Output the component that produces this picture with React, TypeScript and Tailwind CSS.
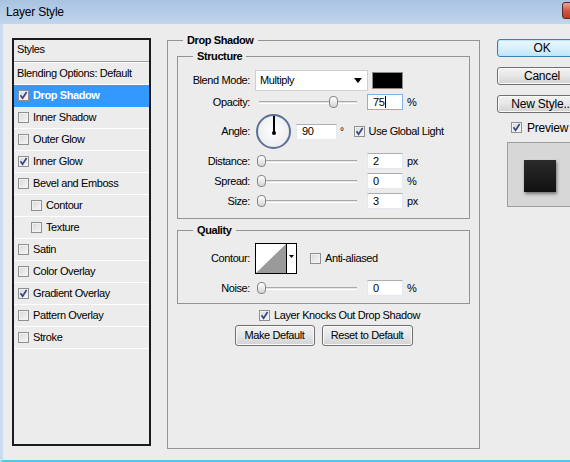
import React from "react";

const styleRows = [
  { label: "Drop Shadow", on: true, selected: true },
  { label: "Inner Shadow" },
  { label: "Outer Glow" },
  { label: "Inner Glow", on: true },
  { label: "Bevel and Emboss" },
  { label: "Contour", nested: true },
  { label: "Texture", nested: true },
  { label: "Satin" },
  { label: "Color Overlay" },
  { label: "Gradient Overlay", on: true },
  { label: "Pattern Overlay" },
  { label: "Stroke" },
];

function Check({ on }: { on?: boolean }) {
  return (
    <span className="inline-flex w-[11px] h-[11px] shrink-0 items-center justify-center border border-[#8f8f8f] bg-gradient-to-br from-[#d8d8d8] to-[#f7f7f7] shadow-[inset_0_0_0_1px_#f2f2f2]">
      {on && (
        <svg width="9" height="9" viewBox="0 0 9 9">
          <path d="M1.5 4.2 L3.6 7.2 L7.6 1" fill="none" stroke="#33478c" strokeWidth="1.7" />
        </svg>
      )}
    </span>
  );
}

function Field({ value, className, focus }: { value: string; className: string; focus?: boolean }) {
  return (
    <div
      className={`h-[16px] bg-white pl-[5px] flex items-center text-[11px] leading-none border ${
        focus ? "border-[#7eb4ea]" : "border-[#e3e9ef] border-t-[#abadb3]"
      } ${className}`}
    >
      {value}
      {focus && <span className="w-px h-[12px] bg-black ml-px" />}
    </div>
  );
}

function Slider({ pos }: { pos: number }) {
  return (
    <div className="relative w-[104px] h-[14px] shrink-0">
      <div className="absolute left-[4px] right-[2px] top-[6px] h-[3px] bg-[#e4e4e4] border-t border-[#a9a9a9] border-b border-b-white" />
      <div
        className="absolute top-[1px] w-[9px] h-[12px] rounded-[4px] border border-[#858585] bg-gradient-to-b from-white to-[#d6d6d6]"
        style={{ left: pos }}
      />
    </div>
  );
}

function Label({ children }: { children: React.ReactNode }) {
  return <span className="w-[73px] shrink-0 text-right pr-px">{children}</span>;
}

function SliderRow({ label, value, unit, pos, focus, className }: { label: string; value: string; unit: string; pos: number; focus?: boolean; className: string }) {
  return (
    <div className={`flex items-center h-[16px] ${className}`}>
      <Label>{label}</Label>
      <div className="ml-[4px]">
        <Slider pos={pos} />
      </div>
      <Field value={value} focus={focus} className="w-[36px] ml-[8px]" />
      <span className="ml-[4px]">{unit}</span>
    </div>
  );
}

function WinButton({ children, className, primary }: { children: React.ReactNode; className: string; primary?: boolean }) {
  return (
    <div
      className={`flex items-center justify-center rounded-[3px] border ${
        primary
          ? "border-[#3c7fb1] bg-gradient-to-b from-[#eaf6fd] via-[#d9f0fc] to-[#bee6fd] shadow-[inset_0_0_0_1px_#c0e4f8]"
          : "border-[#707070] bg-gradient-to-b from-[#f2f2f2] via-[#e6e6e6] to-[#d2d2d2] shadow-[inset_0_0_0_1px_#fafafa]"
      } ${className}`}
    >
      {children}
    </div>
  );
}

function Legend({ children }: { children: React.ReactNode }) {
  return <legend className="ml-[15px] px-[4px] font-bold leading-[14px]">{children}</legend>;
}

export default function App() {
  return (
    <div className="w-[570px] h-[462px] overflow-hidden bg-[#ececec] flex flex-col text-[11px] text-black tracking-[-0.4px] font-['Liberation_Sans',Arial,sans-serif]">
      {/* title bar */}
      <div className="h-[24px] shrink-0 flex items-center justify-between bg-gradient-to-b from-[#a9c3e0] to-[#c1d6ee]">
        <span className="pl-[6px] text-[12px] tracking-[-0.2px]">Layer Style</span>
        <span className="w-[12px] h-[17px] mt-[-3px] -mr-[4px] rounded-[3px] border border-[#5b2a2a] bg-gradient-to-b from-[#e7a594] via-[#cf5a45] to-[#c03a26]" />
      </div>

      <div className="flex-1 flex items-start border-l-[3px] border-l-[#c9dcf0] border-b-2 border-b-[#5ec3e9] pl-[9px]">
        {/* styles list */}
        <div className="mt-[14px] w-[139px] h-[408px] shrink-0 border-2 border-[#1b1b1b] bg-[#ececec] flex flex-col">
          <div className="h-[21px] pt-[2px] pl-[3px] leading-[14px]">Styles</div>
          <div className="h-[2px] border-t border-[#9c9c9c] border-b border-b-white" />
          <div className="h-[22px] flex items-center pl-[3px] border-b border-white">Blending Options: Default</div>
          {styleRows.map((r) => (
            <div
              key={r.label}
              className={`h-[22px] flex items-center gap-[4px] border-b ${
                r.selected ? "bg-[#3399ff] text-white font-bold border-[#3399ff]" : "border-white"
              } ${r.nested ? "pl-[17px]" : "pl-[4px]"}`}
            >
              <Check on={r.on} />
              <span>{r.label}</span>
            </div>
          ))}
        </div>

        {/* drop shadow panel */}
        <fieldset className="ml-[16px] mt-[9px] w-[313px] h-[416px] shrink-0 border border-[#949494]">
          <Legend>Drop Shadow</Legend>
          <div className="px-[9px] flex flex-col">
            <fieldset className="mt-[2px] border border-[#949494] pb-[9px]">
              <Legend>Structure</Legend>
              <div className="flex items-center mt-[7px] h-[21px]">
                <Label>Blend Mode:</Label>
                <div className="ml-[4px] w-[113px] h-[21px] bg-white border border-[#cfcfcf] flex items-center justify-between pl-[4px] pr-[5px]">
                  <span>Multiply</span>
                  <svg width="8" height="5" viewBox="0 0 8 5">
                    <path d="M0 0 H8 L4 5 Z" fill="#000" />
                  </svg>
                </div>
                <div className="ml-[4px] w-[31px] h-[17px] bg-black border border-[#8a8a8a]" />
              </div>
              <SliderRow label="Opacity:" value="75" unit="%" pos={74} focus className="mt-[3px]" />
              <div className="flex items-center mt-[4px] h-[35px]">
                <Label>Angle:</Label>
                <div className="ml-[5px] w-[35px] h-[35px] rounded-full border-2 border-[#5c6f96] bg-[radial-gradient(circle_at_50%_45%,#ffffff,#e4e6ea)] flex justify-center">
                  <div className="relative w-[2px] h-[17px] bg-black">
                    <span className="absolute -left-[1px] bottom-[-2px] w-[4px] h-[4px] bg-black rounded-full" />
                  </div>
                </div>
                <Field value="90" className="w-[41px] ml-[5px]" />
                <span className="ml-[3px] self-start mt-[10px] text-[10px]">°</span>
                <div className="ml-[10px] flex items-center gap-[4px]">
                  <Check on />
                  <span>Use Global Light</span>
                </div>
              </div>
              <SliderRow label="Distance:" value="2" unit="px" pos={2} className="mt-[4px]" />
              <SliderRow label="Spread:" value="0" unit="%" pos={2} className="mt-[4px]" />
              <SliderRow label="Size:" value="3" unit="px" pos={2} className="mt-[4px]" />
            </fieldset>

            <fieldset className="mt-[4px] border border-[#949494] pb-[7px]">
              <Legend>Quality</Legend>
              <div className="flex items-center mt-[6px] h-[31px]">
                <Label>Contour:</Label>
                <div className="ml-[4px] w-[42px] h-[31px] border border-black bg-white flex">
                  <svg width="30" height="29" viewBox="0 0 30 29" className="shrink-0">
                    <path d="M0 29 L30 0 L30 29 Z" fill="#9a9a9a" />
                  </svg>
                  <div className="flex-1 border-l border-black flex items-start justify-center pt-[11px]">
                    <svg width="5" height="3" viewBox="0 0 5 3">
                      <path d="M0 0 H5 L2.5 3 Z" fill="#000" />
                    </svg>
                  </div>
                </div>
                <div className="ml-[13px] flex items-center gap-[4px]">
                  <Check />
                  <span>Anti-aliased</span>
                </div>
              </div>
              <SliderRow label="Noise:" value="0" unit="%" pos={2} className="mt-[6px]" />
            </fieldset>

            <div className="mt-[5px] h-[13px] pl-[82px] flex items-center gap-[4px]">
              <Check on />
              <span>Layer Knocks Out Drop Shadow</span>
            </div>
            <div className="mt-[3px] flex justify-center gap-[7px]">
              <WinButton className="w-[80px] h-[21px]">Make Default</WinButton>
              <WinButton className="w-[91px] h-[21px]">Reset to Default</WinButton>
            </div>
          </div>
        </fieldset>

        {/* right column */}
        <div className="ml-[17px] mt-[15px] w-[90px] shrink-0 flex flex-col text-[12px] tracking-[-0.2px]">
          <WinButton primary className="h-[18px]">OK</WinButton>
          <WinButton className="h-[18px] mt-[10px]">Cancel</WinButton>
          <WinButton className="h-[18px] mt-[10px]">New Style...</WinButton>
          <div className="mt-[8px] h-[13px] pl-[14px] flex items-center gap-[5px]">
            <Check on />
            <span>Preview</span>
          </div>
          <div className="mt-[8px] ml-[10px] h-[65px] border border-[#9e9e9e] border-r-0 bg-[#d7d7d7] pl-[16px] pt-[17px]">
            <div className="w-[32px] h-[32px] bg-gradient-to-b from-[#2b2b2b] to-[#111] shadow-[1px_2px_3px_rgba(0,0,0,0.45)]" />
          </div>
        </div>
      </div>
    </div>
  );
}
